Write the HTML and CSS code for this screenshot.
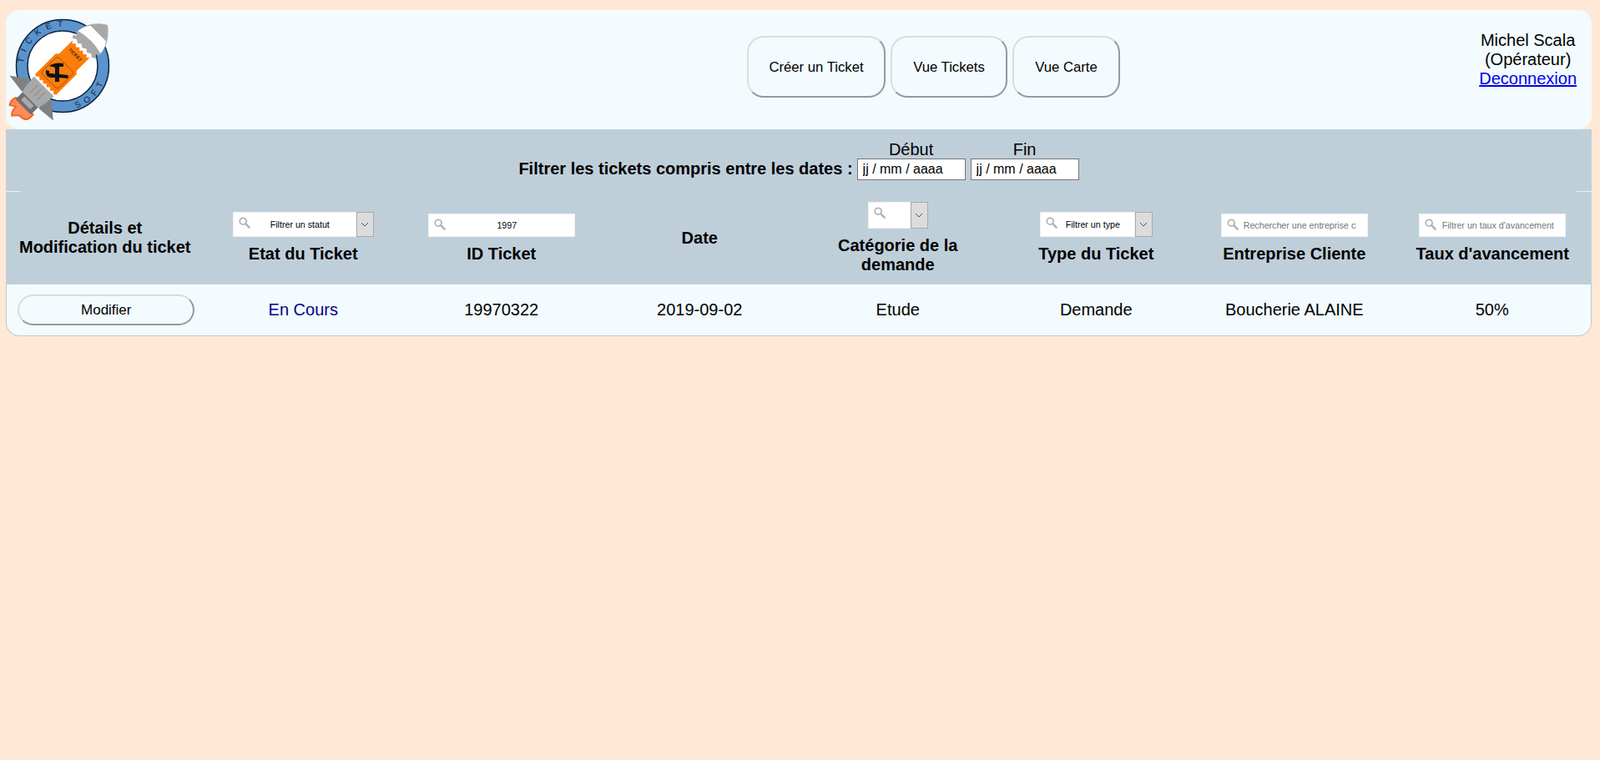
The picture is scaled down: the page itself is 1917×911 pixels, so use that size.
FILE: index.html
```html
<!DOCTYPE html>
<html lang="fr">

<head>
    <meta charset="UTF-8">
    <meta name="viewport" content="width=device-width, initial-scale=1.0">
    <title>Tickets</title>
    <link rel="stylesheet" href="styles.css">
</head>

<body>
    <svg width="0" height="0" class="defs">
        <symbol id="loupe" viewBox="0 0 14 14">
            <circle cx="5.2" cy="5.2" r="3.9" fill="none" stroke="#b4b4b4" stroke-width="1.8" />
            <path d="M8.2 8.2 L12.6 12.6" stroke="#b4b4b4" stroke-width="2.6" stroke-linecap="round" />
        </symbol>
    </svg>

    <header class="top">
        <!-- logo : coordonnees de la page dans le viewBox -->
        <svg class="logo" viewBox="7 12 135 143" width="135" height="143">
            <defs>
                <path id="arcHaut" d="M28.1 75.7 A47 47 0 0 1 83 32.7" />
                <path id="arcBas" d="M91.4 129.4 A53 53 0 0 0 127.2 88.2" />
            </defs>
            <circle cx="75" cy="79" r="49" fill="#fff" stroke="#5b93cc" stroke-width="14" />
            <circle cx="75" cy="79" r="55.5" fill="none" stroke="#0d2340" stroke-width="1.5" />
            <circle cx="75" cy="79" r="42" fill="none" stroke="#0d2340" stroke-width="1.5" />
            <text class="logoText"><textPath href="#arcHaut">TICKET</textPath></text>
            <text class="logoText logoText-bas"><textPath href="#arcBas">SOFT</textPath></text>
            <g transform="translate(73 83) rotate(-45)">
                <!-- flammes -->
                <path d="M-62 -14 Q-68 -17 -74 -13 Q-71 -9 -70 -6 Q-77 -7 -81 -2 Q-76 1 -74 5 Q-75 10 -71 14 Q-67 15 -62 15 Z" fill="#ff8a5c" stroke="#f4661f" stroke-width="2" stroke-linejoin="round" />
                <!-- tuyere -->
                <rect x="-64" y="-13" width="14" height="26" fill="#6f6f6f" />
                <rect x="-60" y="-8" width="6" height="16" fill="#a9a9a9" />
                <!-- ailerons -->
                <path d="M-34 -18 L-49 -38 L-52 -14 Z" fill="#808080" />
                <path d="M-34 18 L-50 37 L-52 14 Z" fill="#808080" />
                <!-- corps -->
                <path d="M-52 -14 L-29 -17 L-29 17 L-52 14 Z" fill="#a8a8a8" />
                <path d="M-46 -6 L-33 -6 M-46 0 L-33 0 M-46 6 L-33 6" stroke="#777" stroke-width="0.8" />
                <!-- ticket -->
                <path d="M-26 -18 L9 -18 L12 -15 L35 -15 L32 -12 L35 -9 L32 -6 L35 -3 L32 0 L35 3 L32 6 L35 9 L32 12 L35 15 L12 15 L9 18 L-26 18 L-28 15 L-25 12 L-28 9 L-25 6 L-28 3 L-25 0 L-28 -3 L-25 -6 L-28 -9 L-25 -12 L-28 -15 Z" fill="#fb7d0b" stroke="#fff" stroke-width="0.8" />
                <rect x="-20" y="-14" width="28" height="28" rx="3" fill="none" stroke="#8a4a08" stroke-width="0.8" />
                <text class="logoStub" transform="translate(22.5 -10) rotate(90)">TICKET</text>
                <!-- ogive -->
                <path d="M36 -16 L39 -19 L42 -15 L45 -19 L58 -16 Q72 -8 77 2 Q70 12 58 18 L45 21 L42 17 L39 21 L36 16 L39 12 L36 8 L39 4 L36 0 L39 -4 L36 -8 L39 -12 Z" fill="#a8a8a8" />
                <path d="M47 -18 Q56 -17 62 -12 L62 14 Q56 20 47 20 Q52 1 47 -18 Z" fill="#fff" />
            </g>
            <!-- outils, droits a l'ecran -->
            <path d="M59 79 Q66 74 76 76 L76 80 L71 80 L71 98 L66 98 L66 81 Q62 80 59 79 Z" fill="#111" />
            <path d="M55 84 L59 85 L59 88 L63 88 Q65 89 72 89 L81 90 Q83 92 81 94 L70 93 L62 93 Q54 93 55 84 Z" fill="#111" />
        </svg>

        <nav class="menu">
            <button class="menuBtn menuBtn-creer">Créer un Ticket</button>
            <button class="menuBtn menuBtn-tickets">Vue Tickets</button>
            <button class="menuBtn menuBtn-carte">Vue Carte</button>
        </nav>

        <div class="user">
            Michel Scala<br>
            (Opérateur)<br>
            <a href="#">Deconnexion</a>
        </div>
    </header>

    <section class="dates">
        <b class="datesLabel">Filtrer les tickets compris entre les dates :</b>
        <label class="dateField">Début<input class="dateInput" type="text" value="jj / mm / aaaa"></label>
        <label class="dateField">Fin<input class="dateInput" type="text" value="jj / mm / aaaa"></label>
    </section>

    <div class="tableWrap">
        <table class="tickets">
            <thead>
                <tr>
                    <th>Détails et<br>Modification du ticket</th>
                    <th>
                        <div class="combo combo-statut">
                            <div class="search">
                                <svg class="loupe"><use href="#loupe" /></svg>
                                <input class="searchInput" type="text" value="Filtrer un statut">
                            </div>
                            <span class="arrow"><svg width="10" height="6" viewBox="0 0 10 6"><path d="M1 1 L5 5 L9 1" fill="none" stroke="#555" /></svg></span>
                        </div>
                        Etat du Ticket
                    </th>
                    <th>
                        <div class="search search-text">
                            <svg class="loupe"><use href="#loupe" /></svg>
                            <input class="searchInput" type="text" value="1997">
                        </div>
                        ID Ticket
                    </th>
                    <th>Date</th>
                    <th>
                        <div class="combo combo-categorie">
                            <div class="search">
                                <svg class="loupe"><use href="#loupe" /></svg>
                                <input class="searchInput" type="text">
                            </div>
                            <span class="arrow"><svg width="10" height="6" viewBox="0 0 10 6"><path d="M1 1 L5 5 L9 1" fill="none" stroke="#555" /></svg></span>
                        </div>
                        Catégorie de la<br>demande
                    </th>
                    <th>
                        <div class="combo combo-type">
                            <div class="search">
                                <svg class="loupe"><use href="#loupe" /></svg>
                                <input class="searchInput" type="text" value="Filtrer un type">
                            </div>
                            <span class="arrow"><svg width="10" height="6" viewBox="0 0 10 6"><path d="M1 1 L5 5 L9 1" fill="none" stroke="#555" /></svg></span>
                        </div>
                        Type du Ticket
                    </th>
                    <th>
                        <div class="search search-text">
                            <svg class="loupe"><use href="#loupe" /></svg>
                            <input class="searchInput" type="text" placeholder="Rechercher une entreprise cliente">
                        </div>
                        Entreprise Cliente
                    </th>
                    <th>
                        <div class="search search-text">
                            <svg class="loupe"><use href="#loupe" /></svg>
                            <input class="searchInput" type="text" placeholder="Filtrer un taux d'avancement">
                        </div>
                        Taux d'avancement
                    </th>
                </tr>
            </thead>
            <tbody>
                <tr>
                    <td><button class="editBtn">Modifier</button></td>
                    <td class="status">En Cours</td>
                    <td>19970322</td>
                    <td>2019-09-02</td>
                    <td>Etude</td>
                    <td>Demande</td>
                    <td>Boucherie ALAINE</td>
                    <td>50%</td>
                </tr>
            </tbody>
        </table>
    </div>
</body>

</html>
```

FILE: styles.css
```css
* {
    box-sizing: border-box;
}

html,
body {
    height: 100%;
}

body {
    margin: 0;
    padding: 12px 10px 0 7px;
    background-color: #ffe9d6;
    font-family: "Liberation Sans", Arial, sans-serif;
    font-size: 20px;
    line-height: 23px;
    color: #000;
}

.defs {
    position: absolute;
}

/* bandeau du haut */
.top {
    display: flex;
    height: 143px;
    background-color: #f3fbff;
    border-radius: 16px;
}

.logo {
    flex: none;
}

.logoText {
    font-size: 10px;
    letter-spacing: 7px;
    fill: #10243c;
}

.logoText-bas {
    letter-spacing: 6px;
}

.logoStub {
    font-size: 5.5px;
    font-weight: bold;
    fill: #3a1d00;
}

.menu {
    display: flex;
    gap: 6px;
    margin-left: 753px;
    padding-top: 31px;
}

.menuBtn {
    height: 74px;
    padding-top: 2px;
    background-color: #f3fbff;
    border: 2px solid;
    border-color: #dcdcdc #969a9e #969a9e #dcdcdc;
    border-radius: 20px;
    font-family: inherit;
    font-size: 16.7px;
    color: #000;
}

.menuBtn-creer {
    width: 166px;
}

.menuBtn-tickets {
    width: 140px;
}

.menuBtn-carte {
    width: 129px;
}

.user {
    margin-left: auto;
    padding: 25px 18px 0 0;
    text-align: center;
}

.user a {
    color: #0000ee;
}

/* filtre par dates */
.dates {
    display: flex;
    justify-content: center;
    align-items: flex-end;
    gap: 6px;
    height: 74px;
    padding: 12px 0 13px 0;
    background-color: #bfcfda;
}

.datesLabel {
    margin-right: -1px;
    padding-bottom: 2px;
}

.dateField {
    display: flex;
    flex-direction: column;
    align-items: center;
}

.dateInput {
    width: 130px;
    height: 26px;
    margin-top: -1px;
    padding: 0 6px;
    background-color: #fff;
    border: 1px solid #767676;
    font-family: inherit;
    font-size: 16px;
    color: #000;
}

/* tableau */
.tableWrap {
    position: relative;
}

/* petits traits clairs aux coins du haut */
.tableWrap::before,
.tableWrap::after {
    content: "";
    position: absolute;
    top: 0;
    width: 18px;
    height: 1px;
    background-color: #e8eff3;
}

.tableWrap::before {
    left: 0;
}

.tableWrap::after {
    right: 0;
}

.tickets {
    width: 100%;
    table-layout: fixed;
    border-collapse: separate;
    border-spacing: 0;
}

.tickets th {
    height: 112px;
    padding: 0;
    background-color: #bfcfda;
    vertical-align: middle;
    text-align: center;
}

.tickets td {
    height: 62px;
    padding: 0;
    background-color: #f3fbff;
    border-bottom: 1px solid #c4c8ca;
    text-align: center;
}

.tickets td:first-child {
    padding-left: 2px;
    border-left: 1px solid #c4c8ca;
    border-bottom-left-radius: 16px;
}

.tickets td:last-child {
    border-right: 1px solid #c4c8ca;
    border-bottom-right-radius: 16px;
}

.status {
    color: #00008b;
}

.editBtn {
    width: 212px;
    height: 37px;
    background-color: #f3fbff;
    border: 2px solid;
    border-color: #dcdcdc #969a9e #969a9e #dcdcdc;
    border-radius: 19px;
    font-family: inherit;
    font-size: 17px;
    color: #000;
}

/* filtres des colonnes */
.search {
    position: relative;
    height: 28px;
}

.search-text {
    width: 176px;
    margin: 1px auto 9px;
}

.loupe {
    position: absolute;
    left: 7px;
    top: 6px;
    width: 14px;
    height: 14px;
}

.searchInput {
    display: block;
    width: 100%;
    height: 100%;
    padding: 0 13px 0 26px;
    background-color: #fff;
    border: 1px solid #eef1f3;
    font-family: inherit;
    font-size: 10.67px;
    color: #000;
    text-align: center;
}

.searchInput::placeholder {
    color: #757575;
    opacity: 1;
}

.combo {
    display: flex;
    height: 30px;
    margin: 0 auto 9px;
    font-weight: normal;
}

.combo .search {
    flex: 1;
    height: 100%;
}

.arrow {
    flex: none;
    display: flex;
    align-items: center;
    justify-content: center;
    width: 21px;
    background-color: #dcdcdc;
    border: 1px solid #a9a9a9;
}

.combo-statut {
    width: 169px;
}

.combo-categorie {
    width: 72px;
    height: 32px;
}

.combo-type {
    width: 135px;
}
```
